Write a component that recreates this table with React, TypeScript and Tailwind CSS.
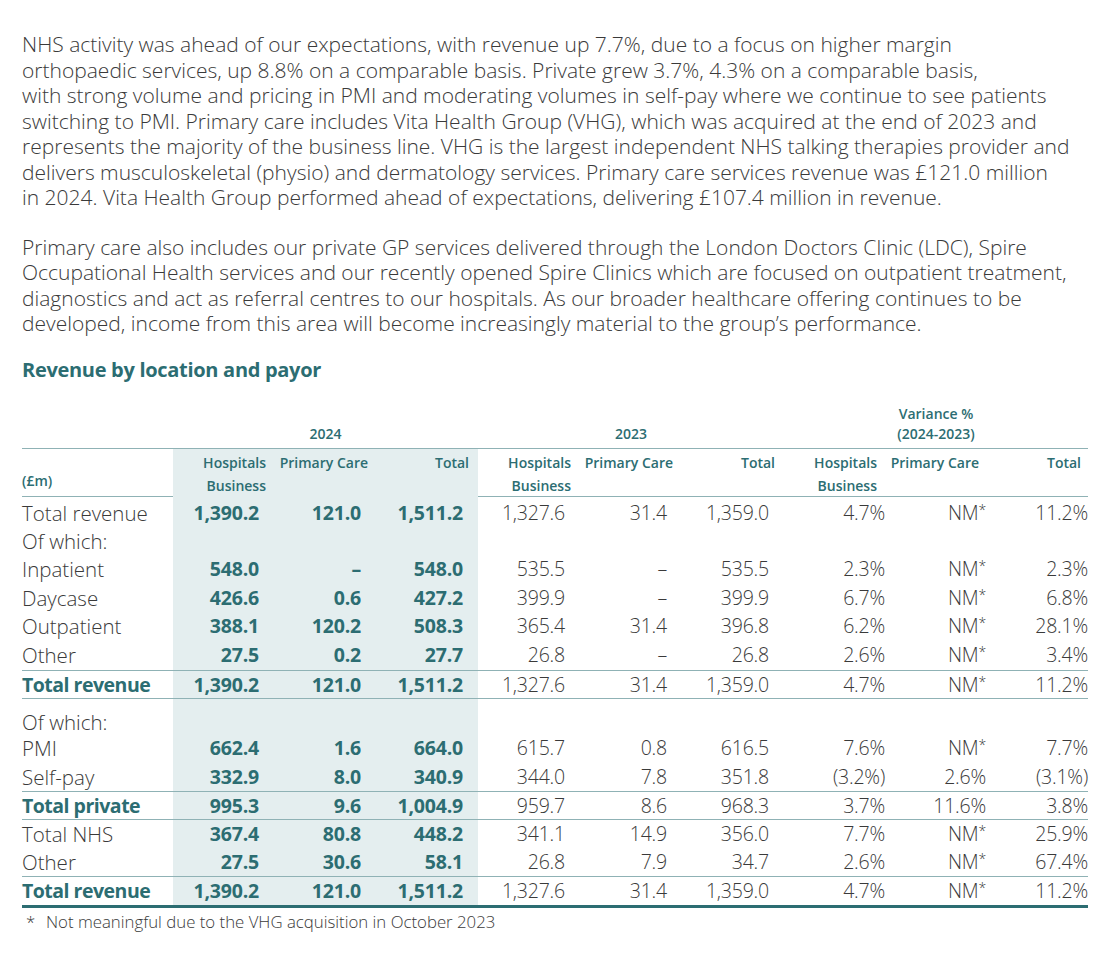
const TEAL = "text-[#2c6d72]";

const para1 = [
  "NHS activity was ahead of our expectations, with revenue up 7.7%, due to a focus on higher margin",
  "orthopaedic services, up 8.8% on a comparable basis. Private grew 3.7%, 4.3% on a comparable basis,",
  "with strong volume and pricing in PMI and moderating volumes in self-pay where we continue to see patients",
  "switching to PMI. Primary care includes Vita Health Group (VHG), which was acquired at the end of 2023 and",
  "represents the majority of the business line. VHG is the largest independent NHS talking therapies provider and",
  "delivers musculoskeletal (physio) and dermatology services. Primary care services revenue was £121.0 million",
  "in 2024. Vita Health Group performed ahead of expectations, delivering £107.4 million in revenue.",
];

const para2 = [
  "Primary care also includes our private GP services delivered through the London Doctors Clinic (LDC), Spire",
  "Occupational Health services and our recently opened Spire Clinics which are focused on outpatient treatment,",
  "diagnostics and act as referral centres to our hospitals. As our broader healthcare offering continues to be",
  "developed, income from this area will become increasingly material to the group’s performance.",
];

type Row = {
  label: string;
  vals?: string[];
  bold?: boolean;
  h: string;
  line?: "thin" | "thick";
};

const rows: Row[] = [
  { label: "Total revenue", vals: ["1,390.2", "121.0", "1,511.2", "1,327.6", "31.4", "1,359.0", "4.7%", "NM*", "11.2%"], h: "h-[30px] pt-[2px]" },
  { label: "Of which:", h: "h-[28.5px]" },
  { label: "Inpatient", vals: ["548.0", "–", "548.0", "535.5", "–", "535.5", "2.3%", "NM*", "2.3%"], h: "h-[28.5px]" },
  { label: "Daycase", vals: ["426.6", "0.6", "427.2", "399.9", "–", "399.9", "6.7%", "NM*", "6.8%"], h: "h-[28.5px]" },
  { label: "Outpatient", vals: ["388.1", "120.2", "508.3", "365.4", "31.4", "396.8", "6.2%", "NM*", "28.1%"], h: "h-[28.5px]" },
  { label: "Other", vals: ["27.5", "0.2", "27.7", "26.8", "–", "26.8", "2.6%", "NM*", "3.4%"], h: "h-[29.5px]", line: "thin" },
  { label: "Total revenue", bold: true, vals: ["1,390.2", "121.0", "1,511.2", "1,327.6", "31.4", "1,359.0", "4.7%", "NM*", "11.2%"], h: "h-[27px]", line: "thin" },
  { label: "Of which:", h: "h-[35px] pt-[11px] leading-[24px]" },
  { label: "PMI", vals: ["662.4", "1.6", "664.0", "615.7", "0.8", "616.5", "7.6%", "NM*", "7.7%"], h: "h-[28.5px]" },
  { label: "Self-pay", vals: ["332.9", "8.0", "340.9", "344.0", "7.8", "351.8", "(3.2%)", "2.6%", "(3.1%)"], h: "h-[28.5px]", line: "thin" },
  { label: "Total private", bold: true, vals: ["995.3", "9.6", "1,004.9", "959.7", "8.6", "968.3", "3.7%", "11.6%", "3.8%"], h: "h-[27px]", line: "thin" },
  { label: "Total NHS", vals: ["367.4", "80.8", "448.2", "341.1", "14.9", "356.0", "7.7%", "NM*", "25.9%"], h: "h-[28px]" },
  { label: "Other", vals: ["27.5", "30.6", "58.1", "26.8", "7.9", "34.7", "2.6%", "NM*", "67.4%"], h: "h-[28px]", line: "thin" },
  { label: "Total revenue", bold: true, vals: ["1,390.2", "121.0", "1,511.2", "1,327.6", "31.4", "1,359.0", "4.7%", "NM*", "11.2%"], h: "h-[28px]", line: "thick" },
];

const GRID = "grid grid-cols-[151px_102px_102px_101px_102px_102px_102px_102px_102px_100px]";
const valPad = ["pr-[16px]", "pr-[16px]", "pr-[15px]", "pr-[15px]", "pr-[15px]", "pr-[15px]", "pr-[1px]", "pr-[2px]", "pr-0"];
const headPad = ["pr-[9px]", "pr-[9px]", "pr-[9px]", "pr-[9px]", "pr-[9px]", "pr-[9px]", "pr-[9px]", "pr-[9px]", "pr-[7px]"];
const shade = (i: number) => (i < 3 ? "bg-[#e4eeef]" : "");

function Value({ v }: { v: string }) {
  if (v === "NM*") {
    return (
      <>
        NM<span className="relative -top-[5px] text-[14px]">*</span>
      </>
    );
  }
  return <>{v}</>;
}

export default function App() {
  return (
    <div className="min-h-screen bg-white px-[22px] pt-[32px] font-['Open_Sans',sans-serif] text-[#3a3a3a]">
      <div className="text-[21px] font-light leading-[25.5px] whitespace-nowrap">
        {para1.map((l) => (
          <div key={l}>{l}</div>
        ))}
      </div>
      <div className="mt-[24px] text-[21px] font-light leading-[25.5px] whitespace-nowrap">
        {para2.map((l) => (
          <div key={l}>{l}</div>
        ))}
      </div>

      <h2 className={`mt-[20px] text-[20px] font-bold leading-[26px] tracking-[-0.3px] ${TEAL}`}>
        Revenue by location and payor
      </h2>

      <div className="w-[1066px]">
        <div className={`${GRID} h-[66px] border-b border-[#8fb2b5] text-[14px] font-semibold leading-[20px] ${TEAL}`}>
          <div />
          <div className="col-span-3 self-end pb-[4px] text-center">2024</div>
          <div className="col-span-3 self-end pb-[4px] text-center">2023</div>
          <div className="col-span-3 self-end pb-[4px] text-center">
            Variance %<br />
            (2024-2023)
          </div>
        </div>

        <div className={`${GRID} h-[48px] border-b border-[#8fb2b5] text-[14px] font-semibold leading-[23px] ${TEAL}`}>
          <div className="self-end pb-[5px]">(£m)</div>
          {["Hospitals\nBusiness", "Primary Care", "Total", "Hospitals\nBusiness", "Primary Care", "Total", "Hospitals\nBusiness", "Primary Care", "Total"].map(
            (t, i) => (
              <div key={i} className={`pt-[2px] text-right whitespace-pre-line ${headPad[i]} ${shade(i)}`}>
                {t}
              </div>
            )
          )}
        </div>

        {rows.map((r, ri) => (
          <div
            key={ri}
            className={`${GRID} ${r.line === "thin" ? "border-b border-[#8fb2b5]" : ""} ${
              r.line === "thick" ? "border-b-[3px] border-[#2c6d72]" : ""
            } text-[19.5px] leading-[28px] tracking-[-0.2px]`}
          >
            <div
              className={`${r.h} whitespace-nowrap ${
                r.bold ? `font-bold ${TEAL} tracking-[-0.5px]` : "text-[20.5px] font-light tracking-normal"
              }`}
            >
              {r.label}
            </div>
            {Array.from({ length: 9 }).map((_, i) => {
              const v = r.vals ? r.vals[i] : "";
              return (
                <div
                  key={i}
                  className={`${r.h} text-right ${valPad[i]} ${shade(i)} ${
                    i < 3 ? `font-bold ${TEAL}` : "font-light"
                  }`}
                >
                  <Value v={v} />
                </div>
              );
            })}
          </div>
        ))}
      </div>

      <div className="mt-[4px] flex text-[16.8px] font-light leading-[20px]">
        <span className="w-[24px] pl-[4px]">*</span>
        <span>Not meaningful due to the VHG acquisition in October 2023</span>
      </div>
    </div>
  );
}
